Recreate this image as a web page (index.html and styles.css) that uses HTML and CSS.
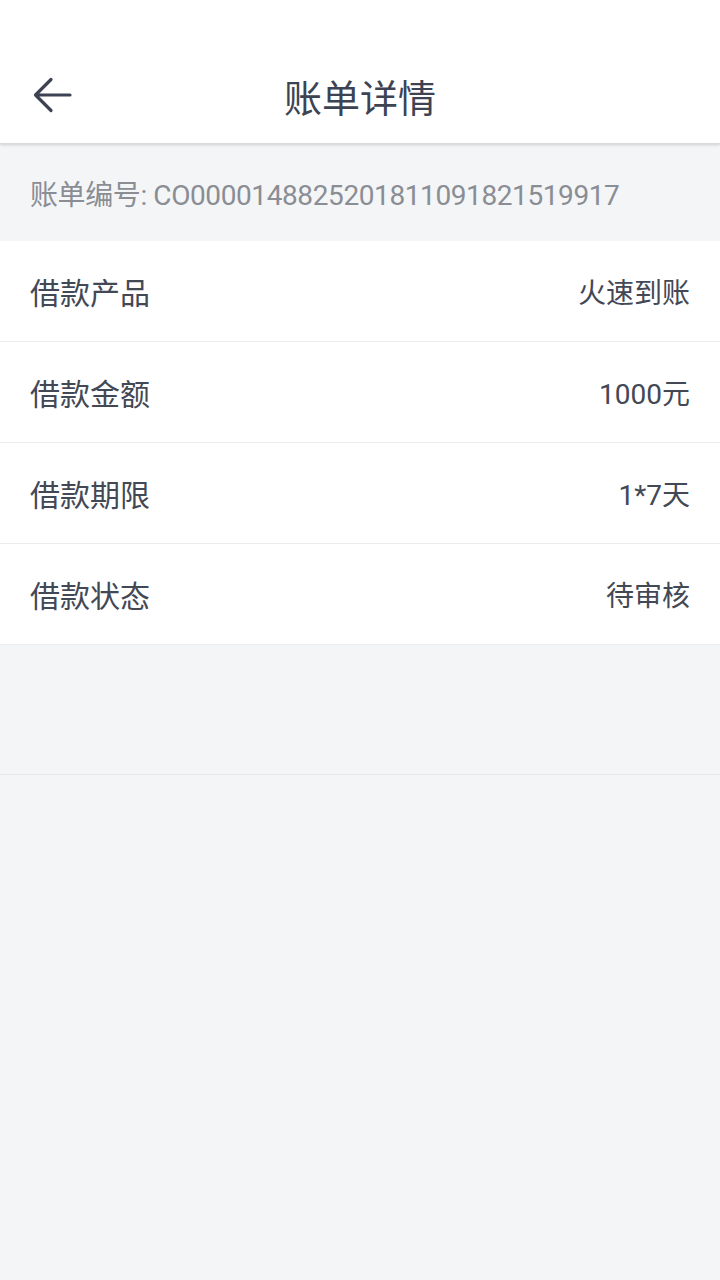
FILE: index.html
```html
<!DOCTYPE html>
<html lang="zh-CN">
<head>
<meta charset="utf-8">
<title>账单详情</title>
<link rel="stylesheet" href="styles.css">
</head>
<body>
<header class="topbar">
  <div class="nav">
    <span class="back">
      <svg width="40" height="40" viewBox="0 0 40 40"><path d="M18 3.5 L2.5 19 L18 34.5 M2.5 19 H37" fill="none" stroke="#3d4352" stroke-width="3.2" stroke-linecap="round" stroke-linejoin="round"/></svg>
    </span>
    <h1 class="title">账单详情</h1>
  </div>
</header>
<section class="billno">账单编号: CO0000148825201811091821519917</section>
<ul class="list">
  <li class="row"><span class="label">借款产品</span><span class="value">火速到账</span></li>
  <li class="row"><span class="label">借款金额</span><span class="value">1000元</span></li>
  <li class="row"><span class="label">借款期限</span><span class="value">1*7天</span></li>
  <li class="row"><span class="label">借款状态</span><span class="value">待审核</span></li>
</ul>
<div class="spacer"></div>
</body>
</html>
```
FILE: styles.css
```css
html, body {
  margin: 0;
  padding: 0;
  background: #f4f5f7;
  font-family: Roboto, "Noto Sans CJK SC", sans-serif;
  color: #434855;
  min-height: 1280px;
}
.topbar {
  background: #fff;
  height: 143px;
  box-shadow: 0 1px 3px rgba(0,0,0,0.16);
  border-bottom: 1px solid #d9dadd;
  position: relative;
  z-index: 1;
  display: flex;
  flex-direction: column;
  justify-content: flex-end;
}
.nav {
  height: 96px;
  display: flex;
  align-items: center;
  justify-content: center;
  position: relative;
}
.back {
  position: absolute;
  left: 33px;
  top: 29px;
  width: 40px;
  height: 40px;
}
.title {
  margin: 0;
  font-weight: 400;
  font-size: 38px;
  color: #3d4352;
}
.billno {
  height: 97px;
  display: flex;
  align-items: center;
  padding-left: 30px;
  font-size: 28px;
  letter-spacing: -0.4px;
  color: #8a8d94;
}
.list {
  list-style: none;
  margin: 0;
  padding: 0;
  background: #fff;
}
.row {
  height: 100px;
  border-bottom: 1px solid #ebecee;
  display: flex;
  align-items: center;
  justify-content: space-between;
  padding: 0 30px;
}
.label {
  font-size: 30px;
}
.value {
  font-size: 28px;
}
.spacer {
  height: 129px;
  border-bottom: 1px solid #e6e7e9;
}
```
